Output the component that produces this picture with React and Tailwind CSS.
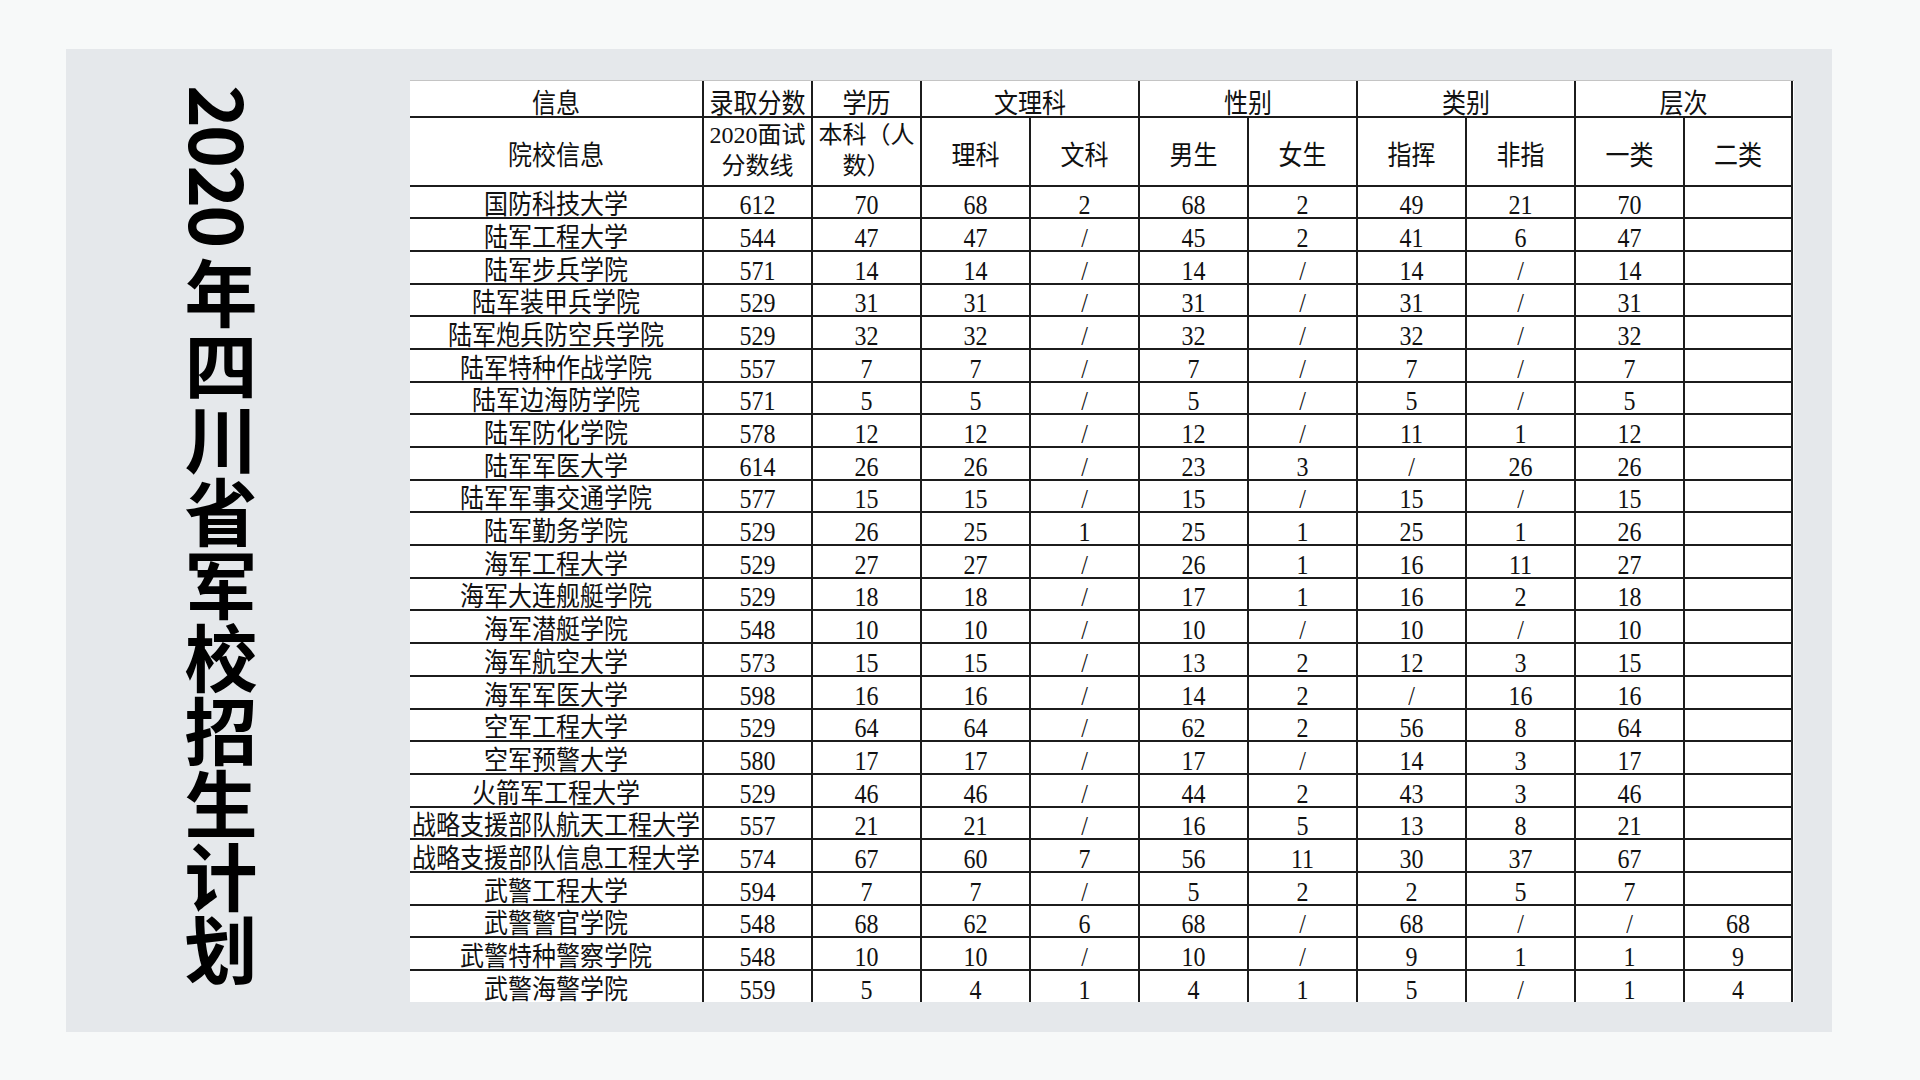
import React from 'react';

const rows = [
  ['国防科技大学', '612', '70', '68', '2', '68', '2', '49', '21', '70', ''],
  ['陆军工程大学', '544', '47', '47', '/', '45', '2', '41', '6', '47', ''],
  ['陆军步兵学院', '571', '14', '14', '/', '14', '/', '14', '/', '14', ''],
  ['陆军装甲兵学院', '529', '31', '31', '/', '31', '/', '31', '/', '31', ''],
  ['陆军炮兵防空兵学院', '529', '32', '32', '/', '32', '/', '32', '/', '32', ''],
  ['陆军特种作战学院', '557', '7', '7', '/', '7', '/', '7', '/', '7', ''],
  ['陆军边海防学院', '571', '5', '5', '/', '5', '/', '5', '/', '5', ''],
  ['陆军防化学院', '578', '12', '12', '/', '12', '/', '11', '1', '12', ''],
  ['陆军军医大学', '614', '26', '26', '/', '23', '3', '/', '26', '26', ''],
  ['陆军军事交通学院', '577', '15', '15', '/', '15', '/', '15', '/', '15', ''],
  ['陆军勤务学院', '529', '26', '25', '1', '25', '1', '25', '1', '26', ''],
  ['海军工程大学', '529', '27', '27', '/', '26', '1', '16', '11', '27', ''],
  ['海军大连舰艇学院', '529', '18', '18', '/', '17', '1', '16', '2', '18', ''],
  ['海军潜艇学院', '548', '10', '10', '/', '10', '/', '10', '/', '10', ''],
  ['海军航空大学', '573', '15', '15', '/', '13', '2', '12', '3', '15', ''],
  ['海军军医大学', '598', '16', '16', '/', '14', '2', '/', '16', '16', ''],
  ['空军工程大学', '529', '64', '64', '/', '62', '2', '56', '8', '64', ''],
  ['空军预警大学', '580', '17', '17', '/', '17', '/', '14', '3', '17', ''],
  ['火箭军工程大学', '529', '46', '46', '/', '44', '2', '43', '3', '46', ''],
  ['战略支援部队航天工程大学', '557', '21', '21', '/', '16', '5', '13', '8', '21', ''],
  ['战略支援部队信息工程大学', '574', '67', '60', '7', '56', '11', '30', '37', '67', ''],
  ['武警工程大学', '594', '7', '7', '/', '5', '2', '2', '5', '7', ''],
  ['武警警官学院', '548', '68', '62', '6', '68', '/', '68', '/', '/', '68'],
  ['武警特种警察学院', '548', '10', '10', '/', '10', '/', '9', '1', '1', '9'],
  ['武警海警学院', '559', '5', '4', '1', '4', '1', '5', '/', '1', '4'],
];

const colWidths = [293, 109, 109, 109, 109, 109, 109, 109, 109, 109, 108];

const cell = 'p-0 border-2 border-[#1c1c1c] text-center leading-[20px]';

const Txt = ({ children }) => (
  <span className="inline-block leading-[22px] origin-bottom scale-y-[1.15] whitespace-nowrap">
    {children}
  </span>
);

const App = () => {
  return (
    <div className="w-[1920px] h-[1080px] bg-[#f7f9f9] pt-[49px] pl-[66px]">
      <div className="w-[1766px] h-[983px] bg-[#e5e8eb] flex">
        {/* Title */}
        <div className="w-[344px] pl-[118px] pt-[36px]">
          <div
            className="[writing-mode:vertical-rl] text-[73px] leading-[73px] font-bold text-black whitespace-nowrap"
            style={{ fontFamily: '"Noto Sans CJK SC", "Noto Sans", sans-serif' }}
          >
            <span className="tracking-[-3px]">2020</span><span className="tracking-[-5px]"> </span>年四川省军校招生计划
          </div>
        </div>

        {/* Table */}
        <div
          className="mt-[31px] w-[1384px] h-[922px] overflow-hidden bg-white border-t border-[#c4c4c4] text-[24px] text-[#111] leading-[20px]"
          style={{ fontFamily: '"Liberation Serif", "Noto Sans CJK SC", serif' }}
        >
          <table className="table-fixed border-collapse w-[1382px]">
            <colgroup>
              {colWidths.map((w, i) => (
                <col key={i} style={{ width: w }} />
              ))}
            </colgroup>
            <thead>
              <tr className="h-[36px]">
                <th className={`${cell} border-t-0 border-l-0 font-normal align-bottom`}><Txt>信息</Txt></th>
                <th className={`${cell} border-t-0 font-normal align-bottom`}><Txt>录取分数</Txt></th>
                <th className={`${cell} border-t-0 font-normal align-bottom`}><Txt>学历</Txt></th>
                <th colSpan={2} className={`${cell} border-t-0 font-normal align-bottom`}><Txt>文理科</Txt></th>
                <th colSpan={2} className={`${cell} border-t-0 font-normal align-bottom`}><Txt>性别</Txt></th>
                <th colSpan={2} className={`${cell} border-t-0 font-normal align-bottom`}><Txt>类别</Txt></th>
                <th colSpan={2} className={`${cell} border-t-0 font-normal align-bottom`}><Txt>层次</Txt></th>
              </tr>
              <tr className="h-[68.5px]">
                <th className={`${cell} border-l-0 font-normal align-middle pt-[12px]`}><Txt>院校信息</Txt></th>
                <th className={`${cell} font-normal align-top`}>
                  <div className="leading-[31px] pt-[2px]">2020面试<br />分数线</div>
                </th>
                <th className={`${cell} font-normal align-top`}>
                  <div className="leading-[31px] pt-[2px]">本科（人<br />数）</div>
                </th>
                {['理科', '文科', '男生', '女生', '指挥', '非指', '一类', '二类'].map((t) => (
                  <th key={t} className={`${cell} font-normal align-middle pt-[12px]`}><Txt>{t}</Txt></th>
                ))}
              </tr>
            </thead>
            <tbody>
              {rows.map((r, ri) => (
                <tr key={ri} className="h-[32.7px]">
                  {r.map((v, ci) => (
                    <td key={ci} className={`${cell} align-bottom ${ci === 0 ? 'border-l-0' : ''}`}>
                      {v && <Txt>{v}</Txt>}
                    </td>
                  ))}
                </tr>
              ))}
            </tbody>
          </table>
        </div>
      </div>
    </div>
  );
};

export default App;
